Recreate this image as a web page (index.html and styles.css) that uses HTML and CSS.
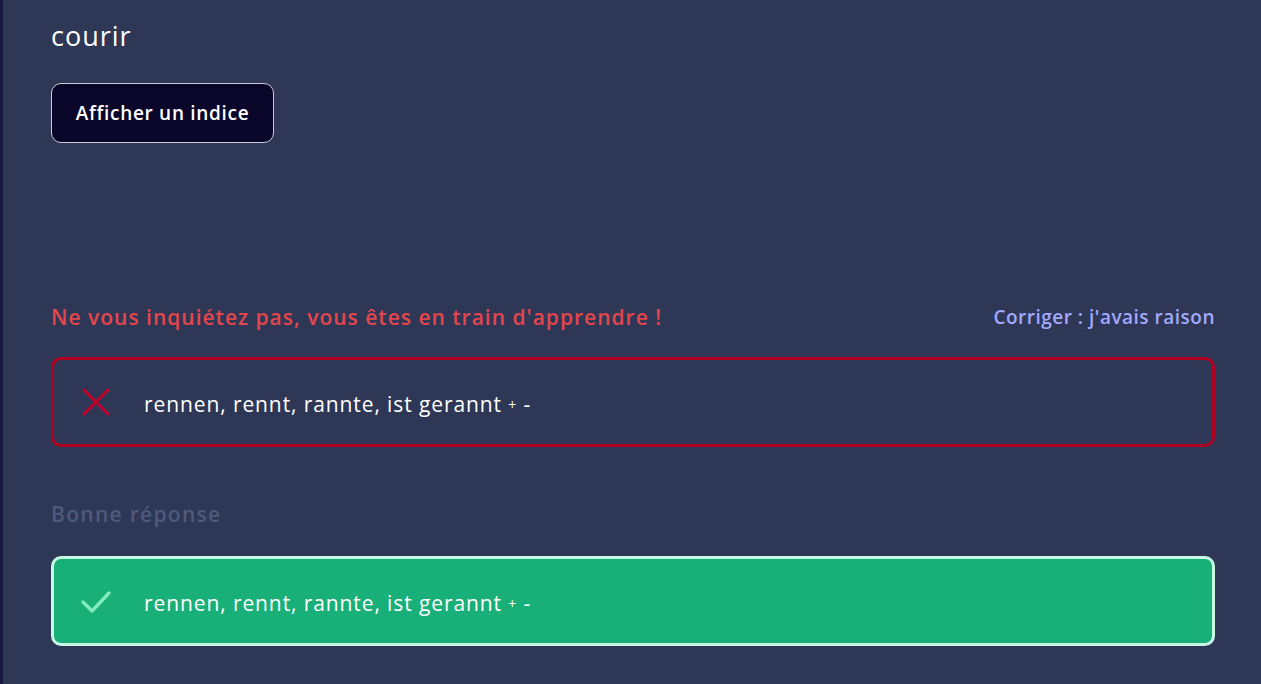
FILE: index.html
```html
<!DOCTYPE html>
<html lang="fr">
<head>
<meta charset="utf-8">
<link rel="stylesheet" href="styles.css">
</head>
<body>
<div class="page">
  <div class="content">
    <div class="word">courir</div>
    <button class="hint">Afficher un indice</button>
    <div class="feedback-row">
      <span class="wrong-msg">Ne vous inquiétez pas, vous êtes en train d'apprendre !</span>
      <a class="correct-link">Corriger : j'avais raison</a>
    </div>
    <div class="answer answer-wrong">
      <svg class="icon" width="32" height="32" viewBox="0 0 32 32"><path d="M4 4 L28 28 M28 4 L4 28" stroke="#c1002b" stroke-width="3" stroke-linecap="round" fill="none"/></svg>
      <span class="answer-text">rennen, rennt, rannte, ist gerannt <span class="sign">+</span> -</span>
    </div>
    <div class="label">Bonne réponse</div>
    <div class="answer answer-right">
      <svg class="icon" width="32" height="32" viewBox="0 0 32 32"><path d="M3 17 L12 26 L29 8" stroke="#80eac0" stroke-width="3.5" stroke-linecap="round" stroke-linejoin="round" fill="none"/></svg>
      <span class="answer-text">rennen, rennt, rannte, ist gerannt <span class="sign">+</span> -</span>
    </div>
  </div>
</div>
</body>
</html>
```
FILE: styles.css
```css
html, body {
  margin: 0;
  padding: 0;
  height: 100%;
}
body {
  background: #2f3756;
  font-family: "Open Sans", sans-serif;
  color: #ffffff;
  overflow: hidden;
}
.page {
  min-height: 100%;
  border-left: 3px solid #1b1a42;
  box-sizing: border-box;
}
.content {
  width: 1164px;
  padding: 18px 0 0 48px;
  display: flex;
  flex-direction: column;
}
.word {
  font-size: 27px;
  letter-spacing: 1px;
  line-height: 36px;
  height: 36px;
}
.hint {
  margin-top: 29px;
  align-self: flex-start;
  width: 223px;
  height: 60px;
  background: #0a0629;
  color: #ffffff;
  border: 1px solid #c9cbd6;
  border-radius: 10px;
  font-family: inherit;
  font-weight: 600;
  font-size: 19px;
  letter-spacing: 0.7px;
  padding: 0;
}
.feedback-row {
  margin-top: 159px;
  display: flex;
  justify-content: space-between;
  align-items: center;
  height: 30px;
  font-weight: 600;
}
.wrong-msg {
  color: #e3464c;
  font-size: 21px;
  letter-spacing: 1px;
}
.correct-link {
  color: #a2a9ff;
  font-size: 19px;
  letter-spacing: 0.5px;
}
.answer {
  box-sizing: border-box;
  height: 90px;
  border-radius: 10px;
  display: flex;
  align-items: center;
  padding-left: 26px;
  gap: 32px;
  font-size: 21px;
  letter-spacing: 0.9px;
}
.answer-wrong {
  margin-top: 25px;
  border: 3px solid #b0001f;
}
.answer-right {
  margin-top: 27px;
  border: 3px solid #c6f8e4;
  background: #19af78;
}
.answer-text {
  color: #ffffff;
  padding-top: 3px;
}
.sign {
  font-size: 14px;
  vertical-align: 2px;
}
.label {
  margin-top: 52px;
  color: #4f5a7a;
  font-weight: 600;
  font-size: 21px;
  letter-spacing: 1.3px;
  line-height: 30px;
}
```
